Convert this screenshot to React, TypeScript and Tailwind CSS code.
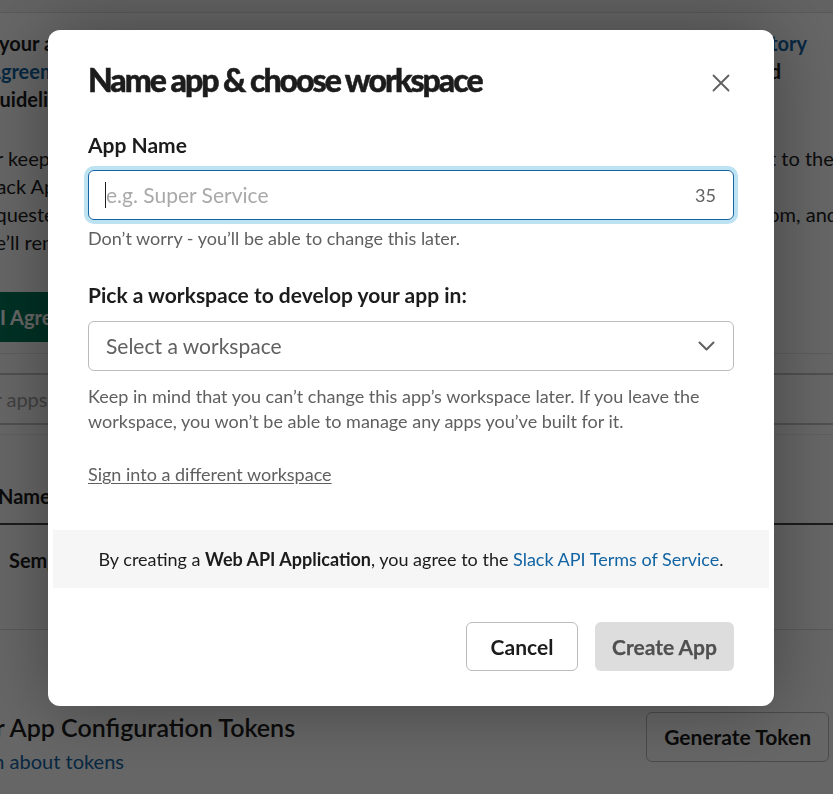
import React from 'react';

const font = { fontFamily: 'Lato, "Noto Sans", sans-serif' };

const PageLine: React.FC<{ left: React.ReactNode; right?: React.ReactNode; bold?: boolean }> = ({ left, right, bold }) => (
  <div className={`flex justify-between whitespace-nowrap overflow-hidden h-[28px] leading-[28px] text-[20px] ${bold ? 'font-bold' : ''}`}>
    <span>{left}</span>
    {right && <span>{right}</span>}
  </div>
);

const BackgroundPage: React.FC = () => (
  <div className="min-h-[794px] bg-white text-[#1d1c1d] overflow-hidden" style={font}>
    <div className="h-[13px] bg-[#f4f4f4] border-b border-[#dddddd]" />

    <div className="pt-[16px]">
      <PageLine bold left={<span className="-ml-[1px] inline-block">your app, you must review the</span>} right={<span className="mr-[26px] text-[#1264a3]">Slack App Directory</span>} />
      <PageLine bold left={<span className="-ml-[13px] inline-block text-[#1264a3]">Agreement</span>} right={<span className="mr-[52px]">and</span>} />
      <PageLine bold left={<span className="-ml-[11px] inline-block">guidelines.</span>} />
    </div>

    <div className="mt-[31px]">
      <PageLine left={<span className="-ml-[22px] inline-block">for keeping your app up to date.</span>} right={<span className="inline-block -mr-[50px]">sent to the team</span>} />
      <PageLine left={<span className="-ml-[19px] inline-block">Slack App Directory listing</span>} />
      <PageLine left={<span className="-ml-[22px] inline-block">requested</span>} right={<span className="inline-block -mr-[5px]">from, and</span>} />
      <PageLine left={<span className="-ml-[20px] inline-block">we’ll remove it.</span>} />
    </div>

    <button className="mt-[36px] -ml-[20px] h-[50px] pl-[20px] pr-6 rounded-[6px] bg-[#007a5a] text-white text-[20px] font-bold">
      I Agree
    </button>

    <div className="mt-[11px] border-b border-[#e8e8e8]" />
    <div className="mt-[19px] h-[52px] border-y-2 border-[#c7c7c7] flex items-center">
      <span className="-ml-[44px] text-[20px] text-[#a0a0a0]">Filter apps</span>
    </div>
    <div className="mt-[9px] border-b border-[#eeeeee]" />

    <div className="h-[90px] flex items-end pb-[12px] border-b-2 border-[#454545] text-[20px] font-bold">
      <span className="-ml-[2px]">Name</span>
    </div>
    <div className="h-[105px] border-b border-[#dddddd] pt-[20px] pl-[9px] text-[20px] font-bold">Semgrep</div>

    <div className="mt-[80px] flex items-start justify-between pr-[4px]">
      <div>
        <div className="-ml-[46px] text-[25px] font-semibold leading-[34px]">Your App Configuration Tokens</div>
        <div className="-ml-[44px] text-[20px] leading-[34px] text-[#1264a3]">Learn about tokens</div>
      </div>
      <button className="mt-[2px] h-[50px] px-[17px] rounded-[6px] border border-[#bbbbbb] text-[21px] font-bold">Generate Token</button>
    </div>
  </div>
);

const CloseIcon = () => (
  <svg width="18" height="18" viewBox="0 0 18 18" fill="none" stroke="#616061" strokeWidth="1.8" strokeLinecap="round">
    <path d="M1.5 1.5l15 15M16.5 1.5l-15 15" />
  </svg>
);

const ChevronIcon = () => (
  <svg width="17" height="10" viewBox="0 0 17 10" fill="none" stroke="#616061" strokeWidth="2" strokeLinecap="round" strokeLinejoin="round">
    <path d="M1.5 1.5l7 7 7-7" />
  </svg>
);

const CreateAppModal: React.FC = () => (
  <div className="fixed inset-0 bg-black/60 pl-[48px] pt-[30px]" style={font}>
    <div className="w-[726px] bg-white rounded-[12px] shadow-[0_0_70px_rgba(0,0,0,0.35)] text-[#1d1c1d] pt-[30px]">
      <div className="h-[40px] flex items-center justify-between pl-10 pr-[35px]">
        <h2 className="text-[32px] leading-[40px] font-black tracking-[-2px] [-webkit-text-stroke:0.5px_#1d1c1d]">
          Name app &amp; choose workspace
        </h2>
        <button className="w-9 h-9 flex items-center justify-center relative top-[3px]">
          <CloseIcon />
        </button>
      </div>

      <div className="px-10">
        <label className="block mt-[31px] text-[21px] leading-[28px] font-bold">App Name</label>
        <div className="mt-[11px] h-[50px] flex items-center rounded-[6px] border border-[#1264a3] ring-4 ring-[#bde2f1] pl-[16px] pr-[17px]">
          <span className="w-px h-[26px] bg-[#1d1c1d]" />
          <span className="flex-1 text-[21px] text-[#a9a9a9]">e.g. Super Service</span>
          <span className="text-[18px] text-[#616061]">35</span>
        </div>
        <p className="mt-[6px] text-[18px] leading-[24px] text-[#616061]">Don’t worry - you’ll be able to change this later.</p>

        <label className="block mt-[31px] text-[21px] leading-[28px] font-bold">Pick a workspace to develop your app in:</label>
        <div className="mt-[12px] h-[50px] flex items-center justify-between rounded-[6px] border border-[#bbbbbb] pl-[17px] pr-[18px]">
          <span className="text-[21px] text-[#616061]">Select a workspace</span>
          <ChevronIcon />
        </div>
        <p className="mt-[13px] text-[18px] leading-[25px] text-[#616061]">
          Keep in mind that you can’t change this app’s workspace later. If you leave the workspace, you won’t be able to manage any apps you’ve built for it.
        </p>

        <a className="inline-block mt-[28px] text-[18px] leading-[24px] text-[#616061] underline underline-offset-2">Sign into a different workspace</a>
      </div>

      <div className="mx-[5px] mt-[43px] h-[58px] bg-[#f6f6f6] flex items-center justify-center text-[18px]">
        <span>
          By creating a <b className="font-bold">Web API Application</b>, you agree to the{' '}
          <a className="text-[#1264a3]">Slack API Terms of Service</a>.
        </span>
      </div>

      <div className="flex justify-end gap-[17px] px-10 pt-[34px] pb-[35px]">
        <button className="w-[112px] h-[49px] rounded-[6px] border border-[#bbbbbb] text-[21px] font-bold">Cancel</button>
        <button className="w-[139px] h-[49px] rounded-[6px] bg-[#dddddd] text-[21px] font-bold text-[#505050] [-webkit-text-stroke:0.25px_#505050]">Create App</button>
      </div>
    </div>
  </div>
);

export default function App() {
  return (
    <div className="relative">
      <BackgroundPage />
      <CreateAppModal />
    </div>
  );
}
